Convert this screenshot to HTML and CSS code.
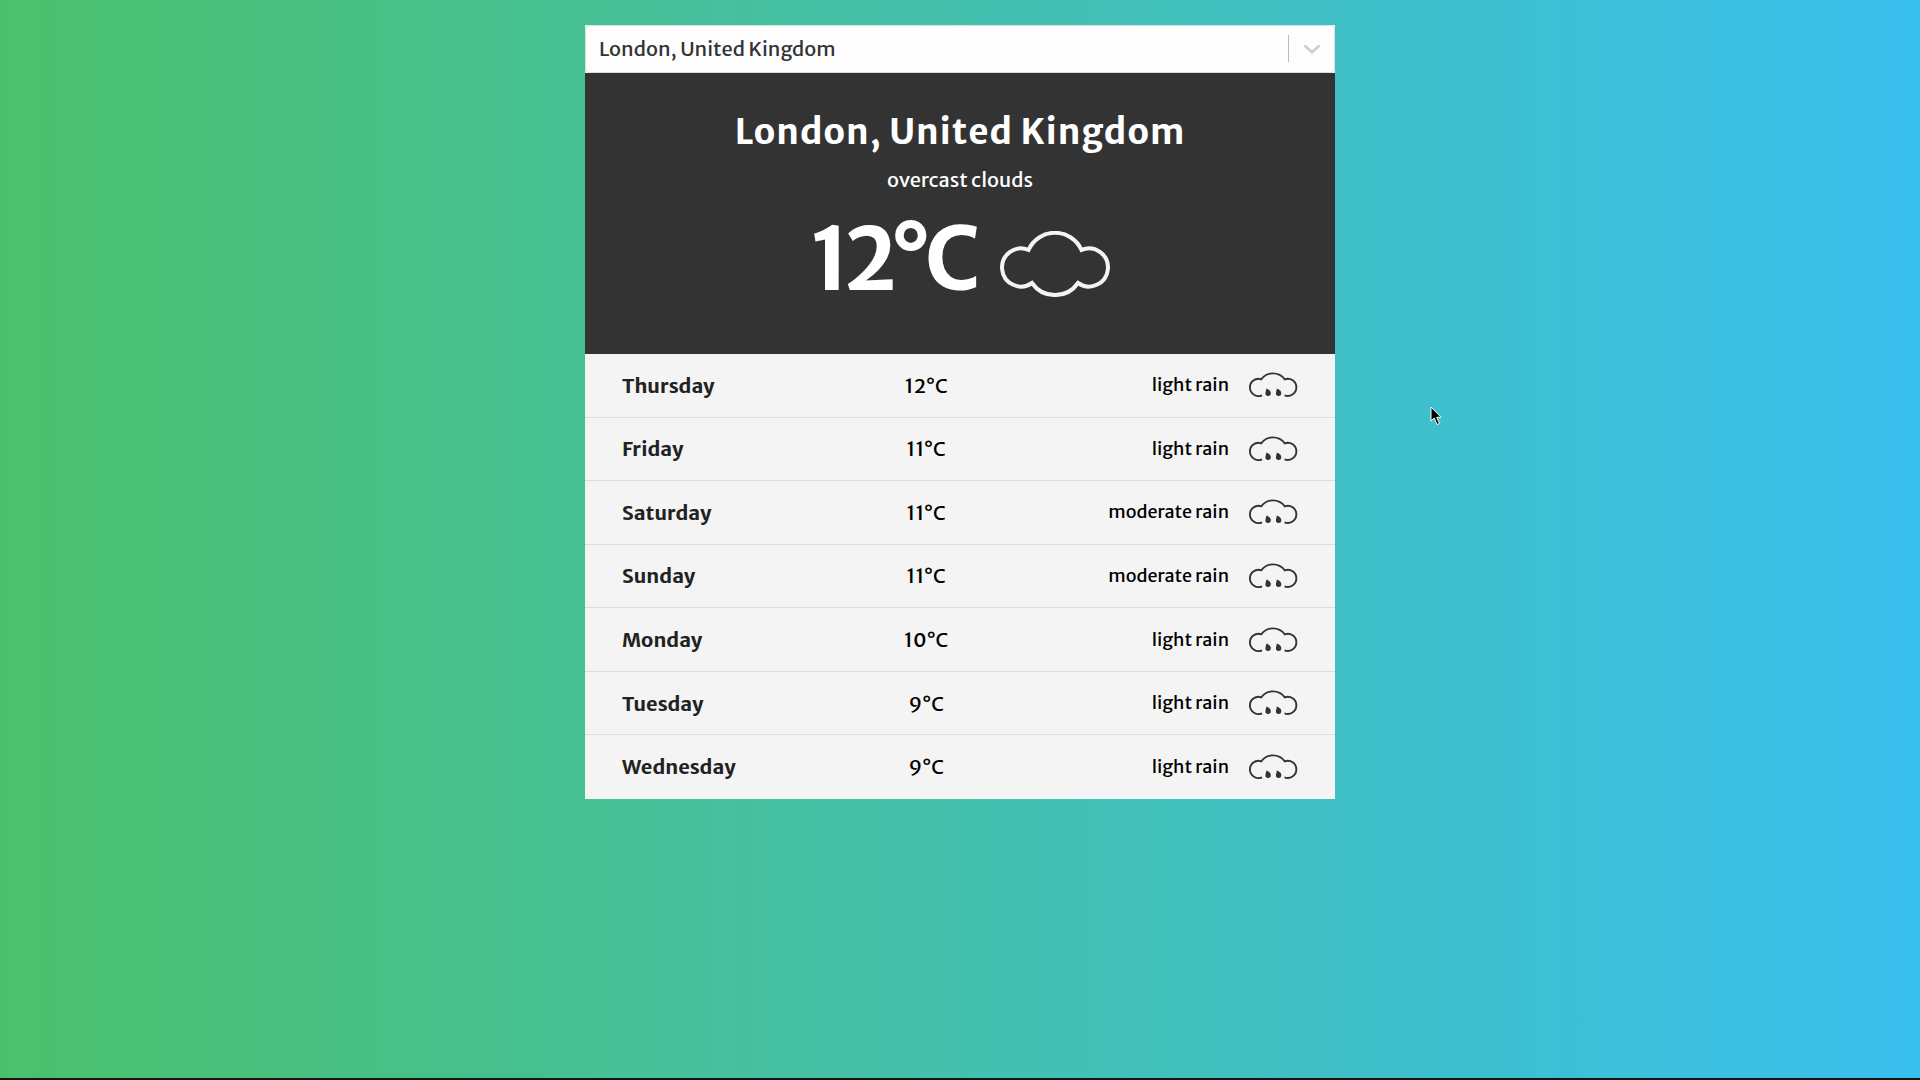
FILE: index.html
```
<!DOCTYPE html>
<html lang="en">
<head>
<meta charset="utf-8">
<meta name="viewport" content="width=device-width, initial-scale=1">
<title>Weather forecast</title>
<link rel="stylesheet" href="styles.css">
</head>
<body>
<svg class="symbols" aria-hidden="true">
  <symbol id="cloud" viewBox="0 0 110 66">
    <path d="M28.500 19A29 29 0 0 1 81.500 19A19 19 0 1 1 78 52A28 28 0 0 1 32 52A19 19 0 1 1 28.500 19Z" fill="none" stroke="currentColor" stroke-width="4"/>
  </symbol>
  <symbol id="rain" viewBox="0 0 50 28">
    <path d="M14 25.300A8.600 8.600 0 1 1 13.300 9.300A14.500 14.500 0 0 1 36.700 9.300A8.600 8.600 0 1 1 36.500 25.300" fill="none" stroke="currentColor" stroke-width="1.900"/>
    <path d="M18.500 18.500Q23 20.500 22.800 23.300A2.700 2.700 0 1 1 17.400 23.300Q17.700 21 18.500 18.500ZM29 18.500Q33.500 20.500 33.300 23.300A2.700 2.700 0 1 1 27.900 23.300Q28.200 21 29 18.500Z" fill="currentColor"/>
  </symbol>
</svg>
<main class="weather">
  <div class="picker">
    <select class="picker-select" aria-label="City">
      <option>London, United Kingdom</option>
    </select>
    <span class="picker-indicator">
      <svg class="picker-chevron" viewBox="0 0 20 20" aria-hidden="true"><path d="M4 7.500L10 13L16 7.500" fill="none" stroke="currentColor" stroke-width="2.400" stroke-linecap="round"/></svg>
    </span>
  </div>
  <section class="current">
    <h1 class="city">London, United Kingdom</h1>
    <p class="condition">overcast clouds</p>
    <div class="now">
      <span class="now-temp">12°C</span>
      <svg class="now-icon" aria-hidden="true"><use href="#cloud"/></svg>
    </div>
  </section>
  <table class="forecast" aria-label="Forecast">
    <tr><th class="day" scope="row">Thursday</th><td class="temp">12°C</td><td class="sky">light rain</td><td class="icon"><svg class="rain" aria-hidden="true"><use href="#rain"/></svg></td></tr>
    <tr><th class="day" scope="row">Friday</th><td class="temp">11°C</td><td class="sky">light rain</td><td class="icon"><svg class="rain" aria-hidden="true"><use href="#rain"/></svg></td></tr>
    <tr><th class="day" scope="row">Saturday</th><td class="temp">11°C</td><td class="sky">moderate rain</td><td class="icon"><svg class="rain" aria-hidden="true"><use href="#rain"/></svg></td></tr>
    <tr><th class="day" scope="row">Sunday</th><td class="temp">11°C</td><td class="sky">moderate rain</td><td class="icon"><svg class="rain" aria-hidden="true"><use href="#rain"/></svg></td></tr>
    <tr><th class="day" scope="row">Monday</th><td class="temp">10°C</td><td class="sky">light rain</td><td class="icon"><svg class="rain" aria-hidden="true"><use href="#rain"/></svg></td></tr>
    <tr><th class="day" scope="row">Tuesday</th><td class="temp">9°C</td><td class="sky">light rain</td><td class="icon"><svg class="rain" aria-hidden="true"><use href="#rain"/></svg></td></tr>
    <tr><th class="day" scope="row">Wednesday</th><td class="temp">9°C</td><td class="sky">light rain</td><td class="icon"><svg class="rain" aria-hidden="true"><use href="#rain"/></svg></td></tr>
  </table>
</main>
<svg class="cursor" viewBox="0 0 12 20" aria-hidden="true"><path d="M1 1V15L4.200 12L7 18.500L9.500 17.500L6.700 11.300H11Z" fill="#000" stroke="#fff" stroke-width="1"/></svg>
</body>
</html>
```
FILE: styles.css
```
* {
  box-sizing: border-box;
}

body {
  margin: 0;
  min-height: 100vh;
  padding: 25px 20px;
  border-bottom: 2px solid #141410;
  background: linear-gradient(to right, #4bc06c, #43c0b4 55%, #39bfee);
  background-attachment: fixed;
  font-family: "Merriweather Sans", "Noto Sans CJK SC", "Open Sans", sans-serif;
  font-size: 20px;
  color: #000;
}

.symbols {
  display: none;
}

.weather {
  max-width: 750px;
  margin: 0 auto;
}

.picker {
  position: relative;
  background: #f0f4f0;
}

.picker-select {
  display: block;
  width: 100%;
  height: 48px;
  padding: 0 60px 2px 13px;
  border: 1px solid #ddd;
  border-radius: 4px;
  background: #fdfdfd;
  appearance: none;
  font: inherit;
  color: #333;
}

.picker-indicator {
  position: absolute;
  inset: 10px 1px 11px auto;
  display: flex;
  align-items: center;
  padding: 0 11px 0 12px;
  border-left: 1px solid #bbb;
  color: #ccc;
  pointer-events: none;
}

.picker-chevron {
  width: 22px;
  height: 22px;
}

.current {
  padding: 33px 38px 43px;
  background: #333;
  color: #fff;
  text-align: center;
}

.city {
  margin: 0;
  font-size: 35px;
  line-height: 52px;
  font-weight: 600;
  letter-spacing: 1px;
}

.condition {
  margin: 7px 0 0;
  font-size: 20px;
  line-height: 30px;
  font-weight: 400;
}

.now {
  display: flex;
  justify-content: center;
  align-items: center;
  gap: 26px;
  margin-top: 13px;
}

.now-temp {
  font-size: 86px;
  line-height: 103px;
  font-weight: 700;
  letter-spacing: -6px;
}

.now-icon {
  width: 110px;
  height: 66px;
  margin-top: 8px;
  color: #f5f5f0;
}

.forecast {
  width: 100%;
  height: 445px;
  border-spacing: 0;
  table-layout: fixed;
  background: #f4f4f4;
}

.forecast td,
.forecast th {
  padding: 0;
  border-bottom: 1px solid #ddd;
  vertical-align: middle;
}

.forecast tr:last-child > * {
  border-bottom-color: transparent;
}

.forecast .day {
  width: 32%;
  padding-left: 37px;
  text-align: left;
  font-weight: 600;
  color: #222;
}

.forecast .temp {
  width: 27%;
  text-align: center;
}

.forecast .sky {
  padding-bottom: 1px;
  text-align: right;
  font-size: 18px;
}

.forecast .icon {
  width: 106px;
  padding: 0 37px 2px 19px;
}

.rain {
  display: block;
  width: 50px;
  height: 28px;
  color: #333;
}

.cursor {
  position: absolute;
  left: 1430px;
  top: 406px;
  width: 12px;
  height: 20px;
}
```
